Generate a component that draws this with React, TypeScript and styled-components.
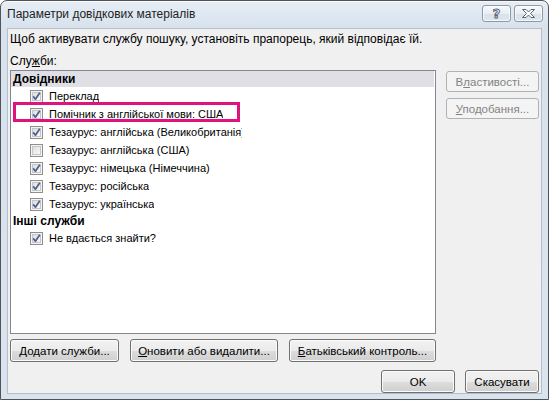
import { FC, ReactNode } from "react";
import styled, { createGlobalStyle, css } from "styled-components";

const GlobalStyle = createGlobalStyle`
  html, body {
    margin: 0;
    padding: 0;
    background: #ffffff;
  }

  body {
    font-family: "Liberation Sans", "Noto Sans", sans-serif;
    font-size: 12px;
    color: #000000;
  }
`;

interface Service {
  label: string;
  checked: boolean;
  marked?: boolean;
}

interface Group {
  title: string;
  selected?: boolean;
  items: Service[];
}

const groups: Group[] = [
  {
    title: "Довідники",
    selected: true,
    items: [
      { label: "Переклад", checked: true },
      { label: "Помічник з англійської мови: США", checked: true, marked: true },
      { label: "Тезаурус: англійська (Великобританія)", checked: true },
      { label: "Тезаурус: англійська (США)", checked: false },
      { label: "Тезаурус: німецька (Німеччина)", checked: true },
      { label: "Тезаурус: російська", checked: true },
      { label: "Тезаурус: українська", checked: true },
    ],
  },
  {
    title: "Інші служби",
    items: [{ label: "Не вдається знайти?", checked: true }],
  },
];

const CheckBox: FC<{ checked: boolean }> = ({ checked }) => (
  <Box width="13" height="13" viewBox="0 0 13 13">
    <defs>
      <linearGradient id="cbFill" x1="0" y1="0" x2="1" y2="1">
        <stop offset="0" stopColor="#dcdcdc" />
        <stop offset="1" stopColor="#fbfbfb" />
      </linearGradient>
    </defs>
    <rect x="0.5" y="0.5" width="12" height="12" fill="#f4f4f4" stroke="#8e8f8f" />
    <rect x="2.5" y="2.5" width="8" height="8" fill="url(#cbFill)" stroke="#c6c6c6" />
    {checked && (
      <path
        d="M3.2 6.4 L5.4 9.2 L9.8 2.8"
        fill="none"
        stroke="#4a5f8e"
        strokeWidth="1.7"
        strokeLinejoin="round"
      />
    )}
  </Box>
);

const HelpGlyph = () => <Glyph>?</Glyph>;

const CloseGlyph = () => (
  <svg width="15" height="11" viewBox="0 0 15 11">
    <path
      d="M1.5 1.5 H5 L7.5 4 L10 1.5 H13.5 L9.5 5.5 L13.5 9.5 H10 L7.5 7 L5 9.5 H1.5 L5.5 5.5 Z"
      fill="#ffffff"
      stroke="#5a6470"
      strokeWidth="1"
      strokeLinejoin="round"
    />
  </svg>
);

const PushButton: FC<{
  width: number;
  height?: number;
  disabled?: boolean;
  children: ReactNode;
}> = ({ width, height = 23, disabled, children }) => (
  <Button type="button" $width={width} $height={height} disabled={disabled}>
    {children}
  </Button>
);

const App: FC = () => (
  <>
    <GlobalStyle />
    <Window>
      <TitleBar>
        <Title>Параметри довідкових матеріалів</Title>
        <CaptionButtons>
          <CaptionButton>
            <HelpGlyph />
          </CaptionButton>
          <CaptionButton>
            <CloseGlyph />
          </CaptionButton>
        </CaptionButtons>
      </TitleBar>

      <Client>
        <Hint>
          Щоб активувати службу пошуку, установіть прапорець, який відповідає
          їй.
        </Hint>
        <Hint>
          Слу<u>ж</u>би:
        </Hint>

        <MainRow>
          <ServiceList>
            {groups.map((group) => (
              <div key={group.title}>
                <GroupHeader $selected={group.selected}>{group.title}</GroupHeader>
                {group.items.map((item) => (
                  <Item key={item.label}>
                    {item.marked && <Marker />}
                    <CheckBox checked={item.checked} />
                    <ItemLabel>{item.label}</ItemLabel>
                  </Item>
                ))}
              </div>
            ))}
          </ServiceList>

          <SideButtons>
            <PushButton width={93} height={21} disabled>
              В<u>л</u>астивості...
            </PushButton>
            <PushButton width={93} height={21} disabled>
              <u>У</u>подобання...
            </PushButton>
          </SideButtons>
        </MainRow>

        <ActionRow>
          <PushButton width={109}>
            <u>Д</u>одати служби...
          </PushButton>
          <PushButton width={148}>
            <u>О</u>новити або видалити...
          </PushButton>
          <PushButton width={147}>
            <u>Б</u>атьківський контроль...
          </PushButton>
        </ActionRow>

        <DialogRow>
          <PushButton width={74}>OK</PushButton>
          <PushButton width={74}>Скасувати</PushButton>
        </DialogRow>
      </Client>
    </Window>
  </>
);

const Window = styled.div`
  box-sizing: border-box;
  width: 549px;
  height: 400px;
  display: flex;
  flex-direction: column;

  border: 1px solid #505458;
  border-radius: 7px 7px 0 0;
  background: linear-gradient(#e6edf5, #d7e2ed 28px, #dae4ee);
  box-shadow: inset 0 1px 0 #f8fbfd;
`;

const TitleBar = styled.div`
  height: 27px;
  display: flex;
  align-items: flex-start;
  padding: 0 5px 0 6px;
`;

const Title = styled.span`
  margin-top: 6px;
  font-size: 12px;
  color: #1e1e1e;
`;

const CaptionButtons = styled.div`
  margin-left: auto;
  margin-top: 4px;
  display: flex;
  gap: 3px;
`;

const CaptionButton = styled.div`
  box-sizing: border-box;
  width: 29px;
  height: 17px;
  display: flex;
  align-items: center;
  justify-content: center;

  border: 1px solid #8c99a8;
  border-radius: 3px;
  background: linear-gradient(#f6f8fb, #e9eef4 50%, #d8e0ea 51%, #dfe6ee);
  box-shadow: inset 0 0 0 1px rgba(255, 255, 255, 0.7);
`;

const Glyph = styled.span`
  font-family: "DejaVu Sans", sans-serif;
  font-size: 13px;
  font-weight: bold;
  line-height: 13px;
  color: #ffffff;
  -webkit-text-stroke: 1px #5a6470;
`;

const Client = styled.div`
  flex: 1;
  margin: 0 6px 5px 6px;
  padding: 1px 2px 0 2px;
  display: flex;
  flex-direction: column;

  border: 1px solid #b4bfcb;
  background: #f0f0f0;
`;

const Hint = styled.div`
  height: 16px;
  line-height: 16px;
  margin-top: 1px;
  white-space: nowrap;

  & + & {
    margin-top: 6px;
  }
`;

const MainRow = styled.div`
  margin-top: 1px;
  display: flex;
  gap: 10px;
`;

const ServiceList = styled.div`
  box-sizing: border-box;
  width: 427px;
  height: 264px;
  overflow: hidden;

  border: 1px solid #828790;
  background: #ffffff;
`;

const GroupHeader = styled.div<{ $selected?: boolean }>`
  height: 16px;
  line-height: 16px;
  margin-right: 1px;
  padding-left: 2px;

  font-weight: bold;
  font-size: 12px;

  ${(props) =>
    props.$selected &&
    css`
      background: #dfdfe5;
    `}
`;

const Item = styled.div`
  position: relative;
  width: 231px;
  height: 18px;
  padding-left: 19px;
  box-sizing: border-box;
  display: flex;
  align-items: center;
  gap: 6px;
`;

const Marker = styled.div`
  position: absolute;
  left: 2px;
  top: -3px;
  width: 227px;
  height: 20px;
  box-sizing: border-box;
  border: 3px solid #e0137e;
  pointer-events: none;
`;

const Box = styled.svg`
  flex: none;
`;

const ItemLabel = styled.span`
  white-space: nowrap;
  overflow: hidden;
  font-size: 11px;
  color: #000000;
`;

const SideButtons = styled.div`
  padding-top: 1px;
  display: flex;
  flex-direction: column;
  gap: 6px;
`;

const Button = styled.button<{ $width: number; $height: number }>`
  box-sizing: border-box;
  width: ${(props) => props.$width}px;
  height: ${(props) => props.$height}px;
  padding: 0;

  font-family: "Liberation Sans", "Noto Sans", sans-serif;
  font-size: 11.5px;
  color: #000000;
  white-space: nowrap;

  border: 1px solid #707070;
  border-radius: 3px;
  background: linear-gradient(#f2f2f2, #ebebeb 50%, #dddddd 51%, #cfcfcf);
  box-shadow: inset 0 0 0 1px #fbfbfb;

  &:disabled {
    color: #838383;
    border-color: #adb2b5;
    background: #f4f4f4;
    box-shadow: none;
  }
`;

const ActionRow = styled.div`
  margin-top: 5px;
  display: flex;
  gap: 11px;
`;

const DialogRow = styled.div`
  margin-top: 8px;
  display: flex;
  justify-content: flex-end;
  gap: 10px;
`;

export default App;
